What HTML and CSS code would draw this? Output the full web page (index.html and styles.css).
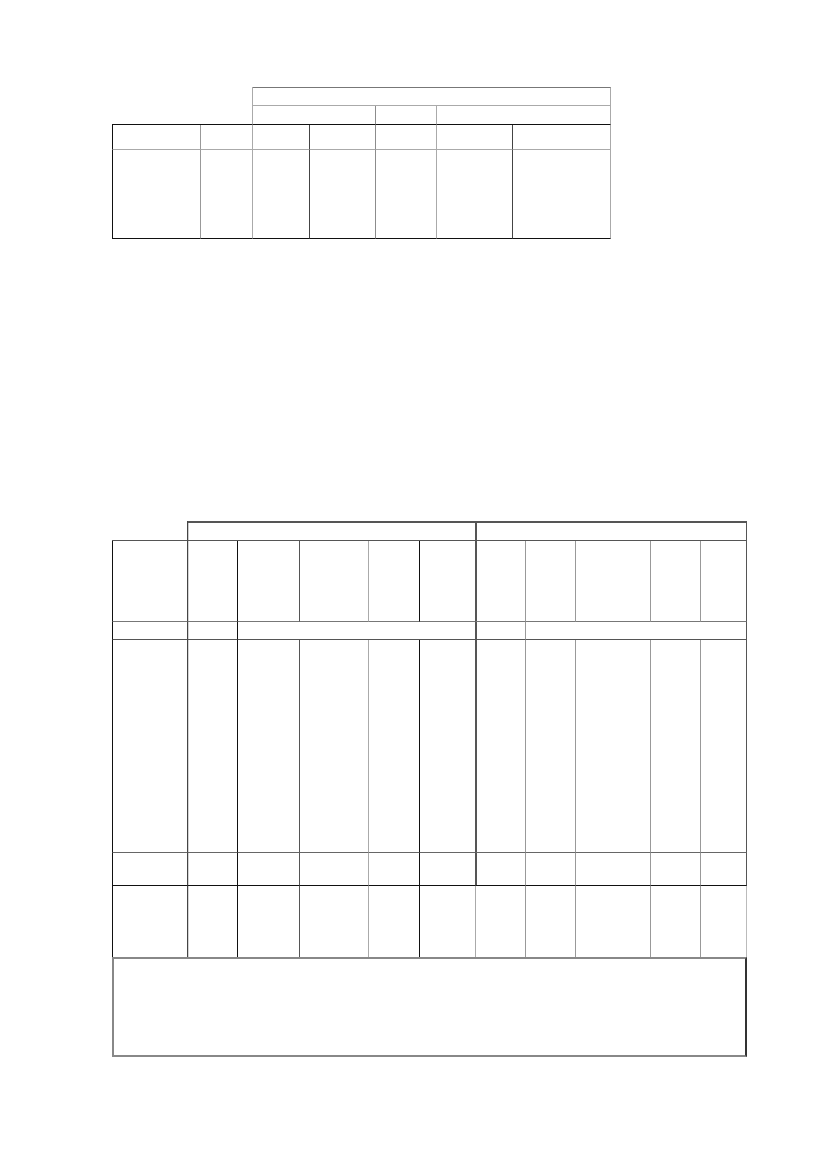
FILE: index.html
```html
<!DOCTYPE html>
<html lang="en">
<head>
<meta charset="utf-8">
<title>Tables</title>
<link rel="stylesheet" href="styles.css">
</head>
<body>
<div class="page">
  <div class="t1">
    <div class="c sp1"></div>
    <div class="c h1"></div>
    <div class="c h2a"></div>
    <div class="c h2b"></div>
    <div class="c h2c"></div>

    <div class="c first k1 ra"></div>
    <div class="c k2 ra"></div>
    <div class="c k3 ra"></div>
    <div class="c k4 ra"></div>
    <div class="c k5 ra"></div>
    <div class="c k6 ra"></div>
    <div class="c k7 ra"></div>

    <div class="c first k1 rb"></div>
    <div class="c k2 rb"></div>
    <div class="c k3 rb"></div>
    <div class="c k4 rb"></div>
    <div class="c k5 rb"></div>
    <div class="c k6 rb"></div>
    <div class="c k7 rb"></div>
  </div>

  <div class="t2">
    <div class="c sp2"></div>
    <div class="c ga"></div>
    <div class="c gb"></div>

    <div class="c first c1 r2"></div>
    <div class="c c2 r2"></div>
    <div class="c c3 r2"></div>
    <div class="c c4 r2"></div>
    <div class="c c5 r2"></div>
    <div class="c c6 r2"></div>
    <div class="c c7 r2"></div>
    <div class="c c8 r2"></div>
    <div class="c c9 r2"></div>
    <div class="c c10 r2"></div>
    <div class="c c11 r2"></div>

    <div class="c first c1 r3"></div>
    <div class="c c2 r3"></div>
    <div class="c c6 r3 span4"></div>
    <div class="c c7 r3"></div>
    <div class="c c11 r3 span4"></div>

    <div class="c first c1 r4"></div>
    <div class="c c2 r4"></div>
    <div class="c c3 r4"></div>
    <div class="c c4 r4"></div>
    <div class="c c5 r4"></div>
    <div class="c c6 r4"></div>
    <div class="c c7 r4"></div>
    <div class="c c8 r4"></div>
    <div class="c c9 r4"></div>
    <div class="c c10 r4"></div>
    <div class="c c11 r4"></div>

    <div class="c first c1 r5"></div>
    <div class="c c2 r5"></div>
    <div class="c c3 r5"></div>
    <div class="c c4 r5"></div>
    <div class="c c5 r5"></div>
    <div class="c c6 r5"></div>
    <div class="c c7 r5"></div>
    <div class="c c8 r5"></div>
    <div class="c c9 r5"></div>
    <div class="c c10 r5"></div>
    <div class="c c11 r5"></div>

    <div class="c first c1 r6"></div>
    <div class="c c2 r6"></div>
    <div class="c c3 r6"></div>
    <div class="c c4 r6"></div>
    <div class="c c5 r6"></div>
    <div class="c c6 r6 light"></div>
    <div class="c c7 r6 noshadow"></div>
    <div class="c c8 r6"></div>
    <div class="c c9 r6"></div>
    <div class="c c10 r6"></div>
    <div class="c c11 r6 lightedge"></div>

    <div class="foot"></div>
  </div>
</div>
</body>
</html>
```

FILE: styles.css
```css
html, body {
  margin: 0;
  padding: 0;
  background: #ffffff;
  font-family: "Liberation Sans", Arial, sans-serif;
}

.page {
  padding: 87px 0 0 112px;
}

/* generic cell: right + bottom rules only */
.c {
  box-sizing: border-box;
  border-style: solid;
  border-color: transparent;
  border-width: 0 1px 1px 0;
}
.first {
  border-left: 1px solid #111;
}

/* ---------- table 1 ---------- */
.t1 {
  display: grid;
  grid-template-columns: 89px 52px 57px 66px 61px 76px 98px;
  grid-template-rows: 19px 19px 25px 89px;
  width: 499px;
}
.sp1 {
  grid-column: span 2;
  grid-row: span 2;
  border-right-color: #aaa;
  border-bottom-color: #111;
}
.h1 {
  grid-column: span 5;
  border-top: 1px solid #777;
  border-right-color: #aaa;
  border-bottom-color: #aaa;
}
.h2a {
  grid-column: span 2;
  border-right-color: #8c8c8c;
  border-bottom-color: #111;
}
.h2b {
  border-right-color: #aaa;
  border-bottom-color: #111;
}
.h2c {
  grid-column: span 2;
  border-right-color: #aaa;
  border-bottom-color: #111;
}
.k1 { border-right-color: #999; }
.k2 { border-right-color: #aaa; }
.k3 { border-right-color: #444; }
.k4 { border-right-color: #8c8c8c; }
.k5 { border-right-color: #aaa; }
.k6 { border-right-color: #444; }
.k7 { border-right-color: #aaa; }
.ra { border-bottom-color: #aaa; }
.rb { border-bottom-color: #111; }

/* ---------- table 2 ---------- */
.t2 {
  display: grid;
  grid-template-columns: 76px 50px 62px 69px 51px 56px 50px 50px 75px 50px 46px;
  grid-template-rows: 20px 81px 18px 213px 33px 71px 100px;
  width: 635px;
  margin-top: 282px;
}
.sp2 {
  border-right-color: #444;
  border-bottom-color: #555;
}
.ga {
  grid-column: span 5;
  border-top: 2px solid #555;
  border-right-color: #555;
  border-bottom-color: #555;
  box-shadow: inset 1px 0 #ccc;
}
.gb {
  grid-column: span 5;
  border-top: 2px solid #555;
  border-right-color: #555;
  border-bottom-color: #555;
  box-shadow: inset 1px 0 #555;
}
.span4 { grid-column: span 4; }

.c1 { border-right-color: #444; }
.c2 { border-right-color: #111; box-shadow: inset 1px 0 #d4d4d4; }
.c3 { border-right-color: #555; }
.c4 { border-right-color: #aaa; }
.c5 { border-right-color: #111; }
.c6 { border-right-color: #555; }
.c7 { border-right-color: #999; box-shadow: inset 1px 0 #555; }
.c8 { border-right-color: #999; }
.c9 { border-right-color: #999; }
.c10 { border-right-color: #999; }
.c11 { border-right-color: #555; }

.r2 { border-bottom-color: #777; }
.r3 { border-bottom-color: #555; }
.r4 { border-bottom-color: #666; }
.r5 { border-bottom-color: #111; }
.r6 { border-bottom-width: 0; }

.light { border-right-color: #aaa; }
.noshadow { box-shadow: none; }
.lightedge { border-right-color: #bbb; }

.foot {
  grid-column: 1 / -1;
  box-sizing: border-box;
  border: 2px solid #888;
  border-right-color: #333;
}
```
